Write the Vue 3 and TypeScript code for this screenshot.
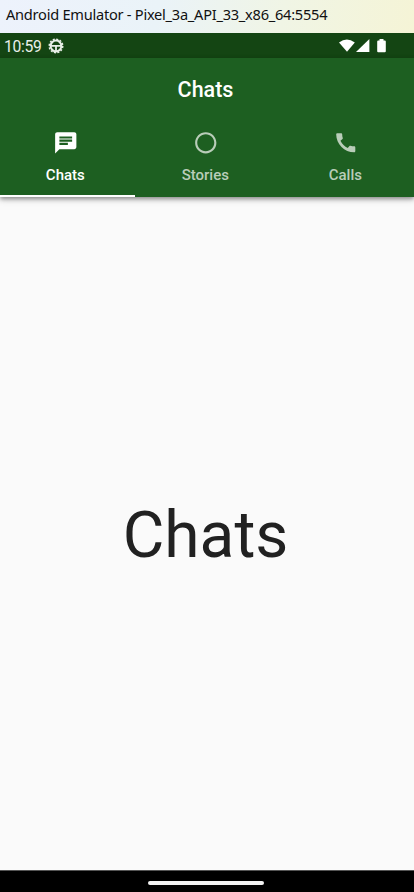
<script setup lang="ts">
import { ref } from 'vue'

interface Tab {
  label: string
  icon: 'chat' | 'circle' | 'phone'
}

const tabs: Tab[] = [
  { label: 'Chats', icon: 'chat' },
  { label: 'Stories', icon: 'circle' },
  { label: 'Calls', icon: 'phone' },
]
const paths: Record<Tab['icon'], string> = {
  chat: 'M20 2H4c-1.1 0-1.99.9-1.99 2L2 22l4-4h14c1.1 0 2-.9 2-2V4c0-1.1-.9-2-2-2zM6 9h12v2H6V9zm8 5H6v-2h8v2zm4-6H6V6h12v2z',
  circle: 'M12 2C6.48 2 2 6.48 2 12s4.48 10 10 10 10-4.48 10-10S17.52 2 12 2zm0 18c-4.42 0-8-3.58-8-8s3.58-8 8-8 8 3.58 8 8-3.58 8-8 8z',
  phone: 'M20.01 15.38c-1.23 0-2.42-.2-3.53-.56-.35-.12-.74-.03-1.01.24l-1.57 1.97c-2.83-1.35-5.48-3.9-6.89-6.83l1.95-1.66c.27-.28.35-.67.24-1.02-.37-1.11-.56-2.3-.56-3.53 0-.54-.45-.99-.99-.99H4.19C3.65 3 3 3.24 3 3.99 3 13.28 10.73 21 20.01 21c.71 0 .99-.63.99-1.18v-3.45c0-.54-.45-.99-.99-.99z',
}
const active = ref(0)
</script>

<template>
  <div class="window">
    <div class="titlebar"><span class="window-title">Android Emulator - Pixel_3a_API_33_x86_64:5554</span></div>
    <div class="status">
      <span class="clock">10:59</span>
      <svg class="gear" viewBox="0 0 16 16">
        <circle cx="8" cy="8" r="5.4" fill="none" stroke="#e9efe9" stroke-width="2" />
        <circle cx="8" cy="8" r="6.8" fill="none" stroke="#e9efe9" stroke-width="1.4" stroke-dasharray="2.1 1.46" />
        <path d="M3 7h10v1.8H3zM7.1 8h1.8v5H7.1z" fill="#e9efe9" />
      </svg>
      <svg class="signals" viewBox="0 0 50 16">
        <path d="M0 4.5Q7.8-1.3 15.8 4.5L8 13.8z" />
        <path d="M30.4 1v13H17z" />
        <path d="M40.5 1h4v1.4h1.3q1 0 1 1v9.8q0 1-1 1h-6.6q-1 0-1-1V3.4q0-1 1-1h1.3z" />
      </svg>
    </div>
    <header class="appbar">
      <h1>Chats</h1>
      <nav class="tabs">
        <button v-for="(tab, i) in tabs" :key="tab.label" class="tab" :class="{ active: active === i }" @click="active = i">
          <svg viewBox="0 0 24 24"><path :d="paths[tab.icon]" /></svg>
          <span>{{ tab.label }}</span>
        </button>
      </nav>
    </header>
    <main>{{ tabs[active].label }}</main>
    <footer><div class="handle"></div></footer>
  </div>
</template>

<style>
body { margin: 0; overflow: hidden; }
</style>

<style scoped>
.window {
  width: 414px;
  height: 892px;
  display: flex;
  flex-direction: column;
  overflow: hidden;
  background: #fafafa;
  font-family: Roboto, sans-serif;
}
.titlebar {
  height: 33px;
  flex: none;
  box-sizing: border-box;
  padding: 4px 0 0 6px;
  background: linear-gradient(100deg, #edf2fc 0%, #eaf3f8 38%, #f0f5e5 68%, #f5f4d6 100%);
  color: #111;
  font: 14.6px/20px "Noto Sans", sans-serif;
  white-space: nowrap;
}
.window-title { display: inline-block; letter-spacing: -0.25px; }
.status {
  height: 25px;
  flex: none;
  box-sizing: border-box;
  display: flex;
  align-items: center;
  padding-left: 4px;
  background: #144513;
  color: #e9efe9;
}
.clock { width: 38px; font-size: 15.7px; line-height: 25px; letter-spacing: -0.3px; padding-top: 1px; }
.gear { width: 16px; height: 16px; margin-left: 6px; }
.signals { width: 50px; height: 16px; margin: 0 25px 0 auto; fill: #fff; }
.appbar {
  position: relative;
  height: 139px;
  flex: none;
  background: #1d5f21;
  box-shadow: 0 2px 4px rgba(0, 0, 0, .35), 0 3px 7px rgba(0, 0, 0, .14);
}
h1 {
  margin: 0;
  padding-right: 3px;
  height: 62px;
  color: #fff;
  font-size: 21.5px;
  font-weight: 500;
  line-height: 63px;
  text-align: center;
}
.tabs { display: flex; width: 420px; height: 77px; margin-left: -4.7px; }
.tab {
  flex: 1;
  display: flex;
  flex-direction: column;
  align-items: center;
  box-sizing: border-box;
  margin: 0;
  padding: 10px 0 0;
  border: 0;
  border-bottom: 2px solid transparent;
  background: none;
  color: #b9cdb9;
  font: 500 15px/20px Roboto, sans-serif;
}
.tab.active { color: #fff; border-color: #fff; }
.tab svg { width: 25.5px; height: 25.5px; margin-bottom: 9.5px; fill: currentColor; }
main {
  flex: 1;
  display: flex;
  align-items: center;
  justify-content: center;
  padding: 3px 3px 0 0;
  color: #212121;
  font-size: 64px;
}
footer {
  height: 22px;
  flex: none;
  box-sizing: border-box;
  display: flex;
  justify-content: center;
  padding: 10px 3px 0 0;
  border-top: 1px solid #555;
  background: #000;
}
.handle { width: 116px; height: 4px; border-radius: 2px; background: #f2f2f2; }
</style>
